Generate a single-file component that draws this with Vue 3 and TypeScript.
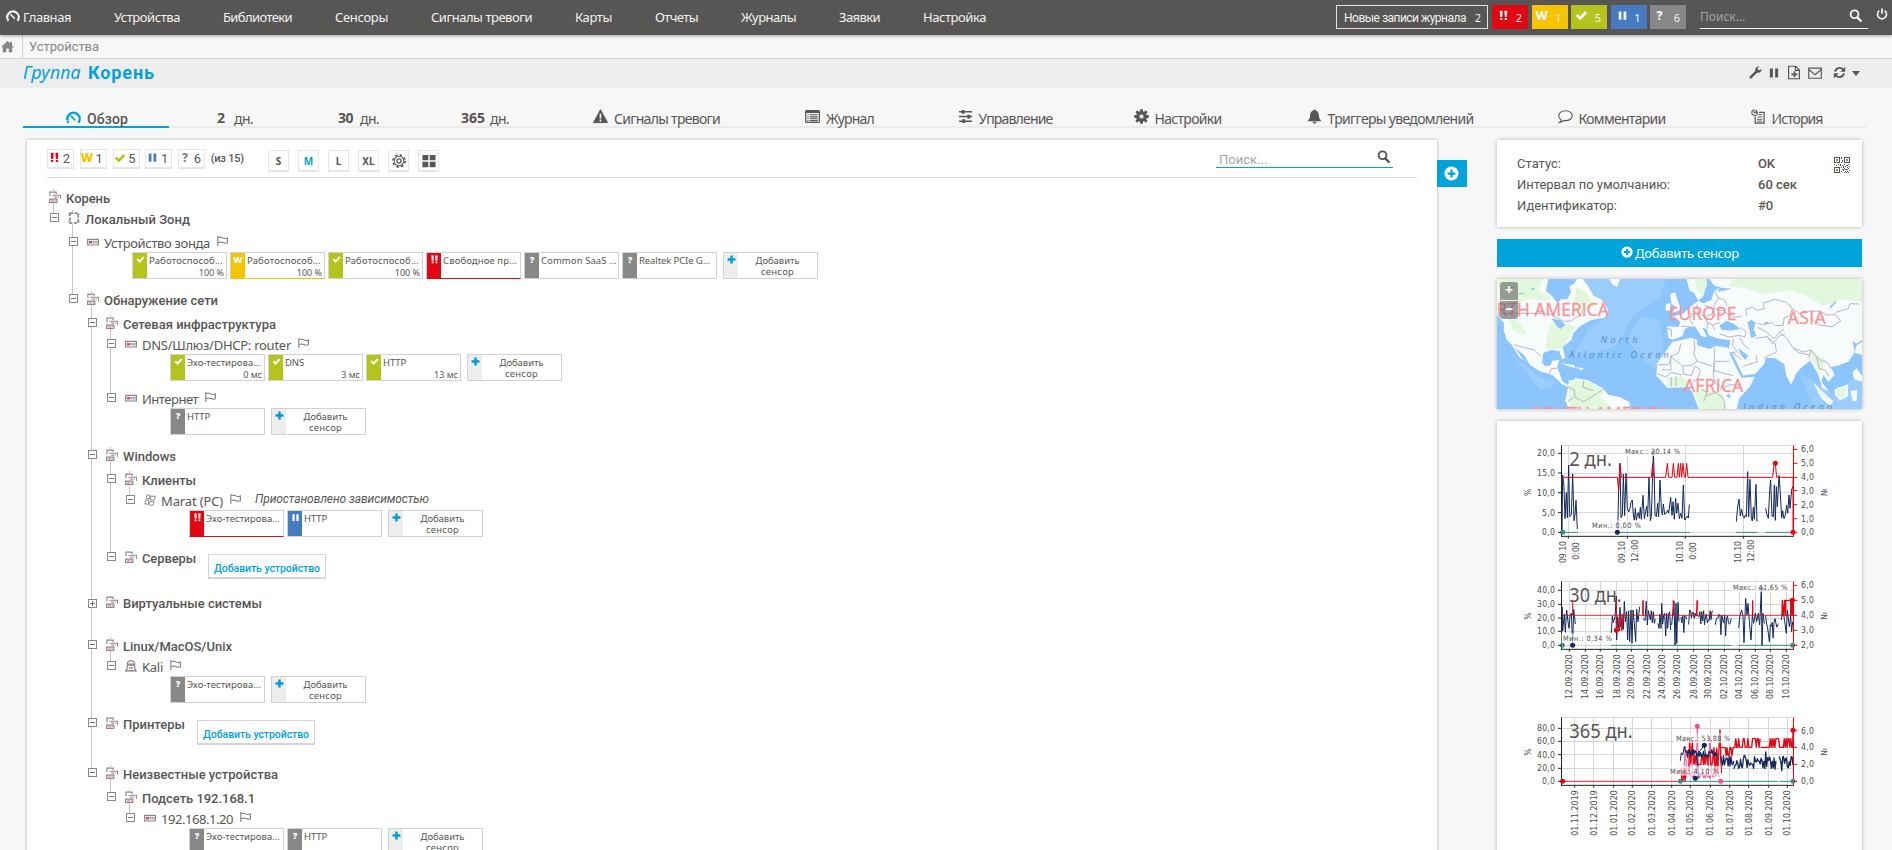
<script setup lang="ts">
type State = 'down' | 'warn' | 'up' | 'pause' | 'unknown'
interface Sensor { s: State; n: string; v?: string; w: number }
interface Row {
  d: number; kind: 'group' | 'probe' | 'device' | 'win' | 'linux'; t: string; w: number; gap: number
  toggle?: '-' | '+'; flag?: boolean; note?: string; btn?: boolean; sensors?: Sensor[]
}

/* Adjusts tracking so that a label takes the width reserved for it */
const vFit = {
  mounted(el: HTMLElement, b: { value?: number }) {
    if (!b.value) return
    const n = (el.textContent || '').trim().length
    const natural = el.getBoundingClientRect().width
    el.style.letterSpacing = (b.value - natural) / n + 'px'
  },
}

const nav: [string, number][] = [
  ['Главная', 48], ['Устройства', 66], ['Библиотеки', 69], ['Сенсоры', 53], ['Сигналы тревоги', 101],
  ['Карты', 37], ['Отчеты', 43], ['Журналы', 55], ['Заявки', 41], ['Настройка', 63],
]
const counters: { s: State; n: number }[] = [
  { s: 'down', n: 2 }, { s: 'warn', n: 1 }, { s: 'up', n: 5 }, { s: 'pause', n: 1 }, { s: 'unknown', n: 6 },
]
const tabs: { i?: string; b?: string; t: string; w: number; bw?: number; mr?: number; on?: boolean; box: number }[] = [
  { i: 'gauge', t: 'Обзор', w: 41, on: true, box: 146 },
  { b: '2', t: 'дн.', w: 19, bw: 8, mr: 9, box: 132 },
  { b: '30', t: 'дн.', w: 19, bw: 15, mr: 7, box: 115 },
  { b: '365', t: 'дн.', w: 19, bw: 24, mr: 5, box: 138 },
  { i: 'alert', t: 'Сигналы тревоги', w: 106, box: 205 },
  { i: 'list', t: 'Журнал', w: 48, box: 161 },
  { i: 'sliders', t: 'Управление', w: 74, box: 170 },
  { i: 'gear', t: 'Настройки', w: 67, box: 175 },
  { i: 'bell', t: 'Триггеры уведомлений', w: 146, box: 250 },
  { i: 'comment', t: 'Комментарии', w: 87, box: 193 },
  { i: 'history', t: 'История', w: 51, box: 157 },
]
const rows: Row[] = [
  { d: 0, kind: 'group', t: 'Корень', w: 44, gap: 0 },
  { d: 1, kind: 'probe', t: 'Локальный Зонд', w: 105, gap: 1, toggle: '-' },
  { d: 2, kind: 'device', t: 'Устройство зонда', w: 106, gap: 4, toggle: '-', flag: true, sensors: [
    { s: 'up', n: 'Работоспособ...', v: '100 %', w: 74 }, { s: 'warn', n: 'Работоспособ...', v: '100 %', w: 74 },
    { s: 'up', n: 'Работоспособ...', v: '100 %', w: 74 }, { s: 'down', n: 'Свободное пр...', w: 74 },
    { s: 'unknown', n: 'Common SaaS ...', w: 76 }, { s: 'unknown', n: 'Realtek PCIe G...', w: 71 } ] },
  { d: 2, kind: 'group', t: 'Обнаружение сети', w: 114, gap: 12, toggle: '-' },
  { d: 3, kind: 'group', t: 'Сетевая инфраструктура', w: 153, gap: 4, toggle: '-' },
  { d: 4, kind: 'device', t: 'DNS/Шлюз/DHCP: router', w: 149, gap: 1, toggle: '-', flag: true, sensors: [
    { s: 'up', n: 'Эхо-тестирова...', v: '0 мс', w: 74 }, { s: 'up', n: 'DNS', v: '3 мс', w: 19 }, { s: 'up', n: 'HTTP', v: '13 мс', w: 23 } ] },
  { d: 4, kind: 'device', t: 'Интернет', w: 56, gap: 9, toggle: '-', flag: true, sensors: [{ s: 'unknown', n: 'HTTP', w: 23 }] },
  { d: 3, kind: 'group', t: 'Windows', w: 53, gap: 12, toggle: '-' },
  { d: 4, kind: 'group', t: 'Клиенты', w: 54, gap: 4, toggle: '-' },
  { d: 5, kind: 'win', t: 'Marat (PC)', w: 62, gap: 1, toggle: '-', flag: true, note: 'Приостановлено зависимостью', sensors: [
    { s: 'down', n: 'Эхо-тестирова...', w: 74 }, { s: 'pause', n: 'HTTP', w: 23 } ] },
  { d: 4, kind: 'group', t: 'Серверы', w: 54, gap: 12, toggle: '-', btn: true },
  { d: 3, kind: 'group', t: 'Виртуальные системы', w: 139, gap: 25, toggle: '+' },
  { d: 3, kind: 'group', t: 'Linux/MacOS/Unix', w: 109, gap: 23, toggle: '-' },
  { d: 4, kind: 'linux', t: 'Kali', w: 21, gap: 1, toggle: '-', flag: true, sensors: [{ s: 'unknown', n: 'Эхо-тестирова...', w: 74 }] },
  { d: 3, kind: 'group', t: 'Принтеры', w: 62, gap: 12, toggle: '-', btn: true },
  { d: 3, kind: 'group', t: 'Неизвестные устройства', w: 155, gap: 30, toggle: '-' },
  { d: 4, kind: 'group', t: 'Подсеть 192.168.1', w: 113, gap: 4, toggle: '-' },
  { d: 5, kind: 'device', t: '192.168.1.20', w: 72, gap: 1, toggle: '-', flag: true, sensors: [
    { s: 'unknown', n: 'Эхо-тестирова...', w: 74 }, { s: 'unknown', n: 'HTTP', w: 23 } ] },
]
/* Connector lines: x, y1, y2 relative to the tree */
const lines = [
  [26, 11, 35], [45, 32, 120], [64, 113, 594], [83, 137, 219], [83, 269, 378], [102, 293, 321],
  [83, 459, 487], [83, 587, 619], [102, 611, 640],
]

const stateIcon: Record<State, string> = { down: 'bang', warn: 'w', up: 'check', pause: 'pause', unknown: 'q' }
const icons: Record<string, string> = {
  check: '<path d="M1 8.5 3.5 6 6.5 9 12.5 2.5 15 5 6.500 14z" fill="currentColor"/>',
  pause: '<path d="M2.500 2h4v12h-4zM9.500 2h4v12h-4z" fill="currentColor"/>',
  bang: '<path d="M2.500 1h4.200l-.6 9H3.100zM9.300 1h4.200l-.6 9H9.900zM3 11.500h3.200v3H3zM9.800 11.500H13v3H9.800z" fill="currentColor"/>',
  plus: '<path d="M5.800 1h4.400v4.800H15v4.400h-4.800V15H5.800v-4.800H1V5.800h4.800z" fill="currentColor"/>',
  gauge: '<path d="M2.800 13.500A6.600 6.600 0 1 1 13.200 13.500" fill="none" stroke="currentColor" stroke-width="2.600" stroke-dasharray="2.200 .5 30"/><path d="M5 6l5 5" stroke="currentColor" stroke-width="1.700"/>',
  home: '<path d="M8 1 0 9h2.200V15h4.300v-4.500h3V15h4.300V9H16l-2.500-2.500V2h-2.300v2.200z" fill="currentColor"/>',
  search: '<circle cx="6.800" cy="6.500" r="4.800" fill="none" stroke="currentColor" stroke-width="2.300"/><path d="M10.300 10.300 14.500 14.800" stroke="currentColor" stroke-width="2.800" stroke-linecap="round"/>',
  power: '<path d="M4.500 3.500A6 6 0 1 0 11.500 3.500" fill="none" stroke="currentColor" stroke-width="2.300"/><path d="M8 .8v7" stroke="currentColor" stroke-width="2.300"/>',
  wrench: '<path d="M15.300 3.800 12.700 5.300 10.800 4.200V2.200L13.300.7C11 0 8.300 1.300 7.700 3.900q-.3 1.200.1 2.300L.8 13q-.8 1 .2 2t2 .2l6.900-7c3 .9 6-1.300 5.400-4.400z" fill="currentColor"/>',
  file: '<path d="M1.800.8h8l4.400 4.400v10H1.800zM9.500.8v4.800h4.700" fill="none" stroke="currentColor" stroke-width="1.300"/><path d="M8.500 6.500v7M5 10h7" stroke="currentColor" stroke-width="2"/>',
  mail: '<path d="M.8 2.500h14.400v11.500H.8zM1 4l7 6 7-6" fill="none" stroke="currentColor" stroke-width="1.300"/>',
  refresh: '<path d="M2.500 7A5.700 5.700 0 0 1 12.500 4.500M13.500 9A5.700 5.700 0 0 1 3.500 11.500" fill="none" stroke="currentColor" stroke-width="2.300"/><path d="M15 1v6H9zM1 15V9h6z" fill="currentColor"/>',
  alert: '<path d="M8 .8 15.500 14.500H.5z" fill="currentColor" stroke="currentColor" stroke-linejoin="round"/><path d="M8 5v5M8 11.300v2" stroke="#f7f7f7" stroke-width="1.800"/>',
  list: '<rect x=".7" y="1.700" width="14.600" height="12.600" rx="1" fill="none" stroke="currentColor" stroke-width="1.300"/><path d="M1 3h14" stroke="currentColor" stroke-width="2.600"/><path d="M2.500 6.200h1.300M5 6.200h8.500M2.500 8.400h1.300M5 8.400h8.500M2.500 10.500h1.300M5 10.500h8.500M2.500 12.400h1.300M5 12.400h8.500" stroke="currentColor" stroke-width="1.100"/>',
  sliders: '<path d="M1 3h14M1 8h14M1 13h14" stroke="currentColor" stroke-width="1.500"/><path d="M4 1h3v4H4zM10 6h3v4h-3zM4.500 11h3v4h-3z" fill="currentColor"/>',
  gear: '<circle cx="8" cy="8" r="4" fill="none" stroke="currentColor" stroke-width="3.600"/><path d="M8 .3v3M8 12.700v3M.3 8h3M12.700 8h3M2.500 2.500l2.200 2.200M11.300 11.300l2.200 2.200M13.500 2.500l-2.200 2.200M4.700 11.300l-2.200 2.200" stroke="currentColor" stroke-width="3"/>',
  gearo: '<circle cx="8" cy="8" r="5.500" fill="none" stroke="currentColor" stroke-width="1.200"/><circle cx="8" cy="8" r="7" fill="none" stroke="currentColor" stroke-width="1.800" stroke-dasharray="2.700 2.800"/><circle cx="8" cy="8" r="2.400" fill="none" stroke="currentColor" stroke-width="1.500"/>',
  grid: '<path d="M.5 1h6.700v6.200H.5zM8.800 1h6.700v6.200H8.800zM.5 8.800h6.700V15H.5zM8.800 8.800h6.700V15H8.800z" fill="currentColor"/>',
  bell: '<path d="M8 .5c.8 0 1.200.5 1.200 1.200C12 2.500 12.600 5 12.800 7.500c.2 2.700 1 4 2.700 5.500H.5c1.700-1.500 2.500-2.800 2.700-5.500C3.400 5 4 2.500 6.800 1.700 6.800 1 7.200.5 8 .5zM6 13.500h4a2 2 0 0 1-4 0z" fill="currentColor"/>',
  comment: '<path d="M8 1.800c4 0 7.200 2.300 7.200 5.300S12 12.400 8 12.400q-1 0-1.800-.2Q4.500 14 1.700 14.300q1.700-1.300 1.600-3C1.700 10.200.8 8.700.8 7.100.8 4.100 4 1.800 8 1.800z" fill="none" stroke="currentColor" stroke-width="1.200"/>',
  history: '<path d="M4.500 8V15h9.500V3.500H8.500" fill="none" stroke="currentColor" stroke-width="1.300"/><path d="M8 6h4M7 8.500h5M6.500 11h5.500M6.500 13h5.500" stroke="currentColor"/><path d="M3 1 1 2.500v3L3.500 7 6 6.500 7 4.500 5.500 1v3H3.500z" fill="none" stroke="currentColor" stroke-width="1.100"/>',
  circleplus: '<circle cx="8" cy="8" r="7.500" fill="#fff"/><path d="M8 3.800v8.400M3.800 8h8.400" stroke="#00a3da" stroke-width="2.400"/>',
  group: '<path d="M1.200 7V1.500h8.300V4" fill="none" stroke="#888" stroke-width="1.500"/><path d="M4.500 5.600h11v5M.8 10.800h9.700v4.400H.8z" fill="none" stroke="#888" stroke-width="1.500"/><path d="M7 8.200h3.500M3 13h3" stroke="#ee7fa8" stroke-width="2"/><path d="M11.500 8.200h2M7.200 13h2" stroke="#aaa" stroke-width="1.500"/>',
  probe: '<path d="M2.500 1.500h11v13h-11z" fill="none" stroke="#777" stroke-width="2" stroke-dasharray="4.500 1.800"/><path d="M0 3h3M13 3h3M0 13h3M13 13h3" stroke="#999" stroke-width="1.500"/>',
  device: '<path d="M.8 4.500h14.400v7.500H.8z" fill="#eee" stroke="#8a8a8a" stroke-width="1.600"/><path d="M2.800 8.300h3.700" stroke="#e8256d" stroke-width="3"/><path d="M7.700 8.300h1.500M10.200 8.300h1.300M12.500 8.300h1.200" stroke="#888" stroke-width="3"/>',
  win: '<path d="M4 1.500q3-1 4 .5L7 7Q5.500 5.500 2.800 6.500zM9.500 2.500Q12 4 15 2.500L13.800 7.500Q11 8.500 8.600 7.500zM2.500 8.500q3-1 4 .5l-1 5Q4 12.500 1 13.500zM8.300 9.500q2.500 1.300 5.200 0L12.300 14.500Q9.500 15.700 7 14.500z" fill="none" stroke="#888" stroke-width="1.300"/>',
  linux: '<path d="M3 11V6Q3 1 8 1t5 5v5l2 3.500H1zM5 8V5.500h2V8M9 8V5.500h2V8" fill="none" stroke="#777" stroke-width="1.400"/><path d="M5.500 9.500h5l.7 2h-6.400z" fill="#e8256d" opacity=".7"/>',
  flag: '<path d="M1.200 0v16" stroke="#777" stroke-width="1.500"/><path d="M2 2.500Q5 1 8.500 3t6.500 0v8q-3 1.200-6.500-.7T2 10.800" fill="none" stroke="#777" stroke-width="1.600"/>',
}
const actions = ['wrench', 'pause', 'file', 'mail', 'refresh']
const sizes = ['S', 'M', 'L', 'XL']

/* Deterministic noise for the history charts */
function noise(x0: number, x1: number, step: number, lo: number, hi: number, seed: number, deep = 0, low = 0): string {
  let s = seed
  const r = () => ((s = (s * 16807) % 2147483647) / 2147483647)
  r(); r()
  const out: string[] = []
  for (let x = x0; x <= x1; x += step) {
    const y = r() < deep ? low - r() * 35 : lo + r() * (hi - lo)
    out.push(`${x.toFixed(1)},${y.toFixed(1)}`)
  }
  return out.join(' ')
}
function square(x0: number, x1: number, step: number, a: number, b: number, seed: number): string {
  let s = seed
  const r = () => ((s = (s * 16807) % 2147483647) / 2147483647)
  const out: string[] = []
  for (let x = x0; x <= x1; x += step) out.push(`${x},${r() > 0.5 ? a : b}`)
  return out.join(' ')
}
interface Chart {
  view: string; h: number; title: string; tw: number; ty: number; top: number; base: number; mid: number
  left: [string, number][]; right: [string, number][]; xs: [string, number][]; xl: number; xlen: number
  paths: { c: string; p: string; w?: number }[]; dots: [number, number, string][]
  max: [string, number, number, number]; min: [string, number, number, number]
}
const N = '#13295c', R = '#e30613', T = '#3c9089', P = '#ee4f96'
const charts: Chart[] = [
  {
    view: '51 3 1095 417', h: 139, title: '2 дн.', tw: 128, ty: 137, top: 76, base: 349, mid: 215,
    left: [['20,0', 100], ['15,0', 159], ['10,0', 218], ['5,0', 278], ['0,0', 337]],
    right: [['6,0', 88], ['5,0', 130], ['4,0', 172], ['3,0', 212], ['2,0', 254], ['1,0', 296], ['0,0', 337]],
    xs: [['', 265], ['', 442], ['', 616], ['', 790]], xl: 0, xlen: 0,
    paths: [
      { c: T, p: '247,337 294,337' }, { c: T, p: '413,337 629,337' }, { c: T, p: '768,337 833,337' }, { c: T, p: '855,337 940,337' },
      { c: N, p: '246,340 248,165 252,200 255,296 259,218 262,293 266,135 269,290 274,285 278,162 282,302 285,285 288,241 292,327' },
      { c: N, p: '413,337 416,210 420,130 423,293 427,285 430,162 434,287 438,160 442,265 446,276 450,265 453,247 457,240 460,285 463,301 466,265 469,301 472,285 475,278 478,295 481,262 484,298 489,226 493,296 497,275 500,258 503,290 507,172 511,302 514,290 518,165 520,92 523,180 525,285 529,290 533,250 536,290 540,180 544,265 547,285 550,252 554,283 558,280 563,270 566,280 572,232 576,286 579,245 583,298 587,235 590,280 594,250 598,296 602,280 606,295 610,195 614,300 618,294 622,288 625,294 628,253' },
      { c: N, p: '769,305 773,260 777,237 781,288 785,268 789,290 793,294 796,285 799,290 803,155 806,291 810,178 814,295 817,303 820,262 823,298 828,193 831,305' },
      { c: N, p: '857,265 861,285 865,295 869,212 872,180 876,288 880,290 883,195 886,301 889,200 892,260 897,166 900,205 905,294 908,272 912,296 916,285 920,256 923,280 927,225 930,265 935,210 938,200' },
      { c: R, p: '246,172 412,172 416,213 420,130 424,172 514,172 518,130 522,172 557,172 562,130 566,172 576,172 580,130 584,172 591,172 595,130 598,172 602,130 605,172 609,130 613,172 616,172 620,130 624,172 878,172 882,135 886,130 890,172 939,172 939,337', w: 3 },
    ],
    dots: [[248, 337, T], [412, 337, N], [520, 99, '#6e7391'], [886, 130, R], [939, 337, R]],
    max: ['Макс.: 20,14 %', 435, 102, 165], min: ['Мин.: 0,00 %', 336, 324, 146],
  },
  {
    view: '51 0 1095 420', h: 140, title: '30 дн.', tw: 157, ty: 125, top: 64, base: 268, mid: 166,
    left: [['40,0', 91], ['30,0', 133], ['20,0', 174], ['10,0', 214], ['0,0', 256]],
    right: [['6,0', 76], ['5,0', 121], ['4,0', 166], ['3,0', 211], ['2,0', 256]],
    xs: [['12.09.2020', 268], ['14.09.2020', 316], ['16.09.2020', 361], ['18.09.2020', 410], ['20.09.2020', 454], ['22.09.2020', 502], ['24.09.2020', 547], ['26.09.2020', 592], ['28.09.2020', 641], ['30.09.2020', 685], ['02.10.2020', 733], ['04.10.2020', 778], ['06.10.2020', 826], ['08.10.2020', 871], ['10.10.2020', 919]],
    xl: 415, xlen: 134,
    paths: [
      { c: T, p: '393,256 754,256' }, { c: T, p: '775,256 938,256' },
      { c: N, p: '247,141 248,213 253,162 256,217 260,150 264,185 267,205 270,165 274,160 278,256 281,148 286,192' },
      { c: N, p: '394,220 397,168 400,188 405,170 409,108 410,240 413,170 416,205 420,142 423,200 427,162 430,208 433,124' },
      { c: N, p: '433,124 436,185 440,155 443,240 446,152 449,245 453,150 456,250 459,150 463,190 467,245 470,148 474,185 479,140' },
      { c: N, p: '489,176 492,178 495,182 499,123 502,195 505,152 508,165 511,180 514,152 517,188 520,155 523,190 526,178' },
      { c: N, p: '534,190 537,205 540,163 543,205 545,130 548,192 551,165 554,160 557,228 560,160 563,205 566,162 569,155 572,210' },
      { c: N, p: '575,195 579,150 582,123 585,255 588,130 590,250 594,127 597,185' },
      { c: N, p: noise(603, 622, 2.8, 165, 195, 31, 0.3, 252) },
      { c: N, p: noise(626, 700, 2.8, 145, 195, 37, 0.08, 240) },
      { c: N, p: noise(706, 754, 2.8, 150, 200, 39, 0.16, 247) },
      { c: N, p: '776,204 780,165 785,150 789,170 792,248 797,115 801,165 804,130 808,185 813,240 817,165 821,190 826,160 830,185 835,160 839,195 844,86 846,256 849,160 853,190' },
      { c: N, p: noise(857, 897, 2.8, 160, 203, 81, 0.12, 248) }, { c: N, p: '904,180 909,145 914,185 919,220 922,150 928,200 932,168 935,215 938,185' },
      { c: R, p: '246,166 939,166', w: 2.5 }, { c: R, p: '278,166 278,122' }, { c: R, p: '409,120 409,211 418,211 421,167 426,211 429,167', w: 4 },
      { c: R, p: '489,167 489,121', w: 5 }, { c: R, p: '580,167 580,121', w: 4 }, { c: R, p: '650,167 652,121', w: 5 }, { c: R, p: '818,167 818,121', w: 4 },
      { c: R, p: '906,167 907,121 911,167 914,121 917,167 917,121 932,121 932,167 937,121 937,167', w: 4 },
    ],
    dots: [[247, 256, T], [278, 256, N], [409, 211, R], [844, 87, '#596586'], [937, 121, R], [938, 256, T]],
    max: ['Макс.: 41,65 %', 759, 90, 163], min: ['Мин.: 0,34 %', 249, 243, 146],
  },
  {
    view: '51 0 1095 450', h: 150, title: '365 дн.', tw: 190, ty: 113, top: 52, base: 256, mid: 154,
    left: [['80,0', 85], ['60,0', 124], ['40,0', 164], ['20,0', 205], ['0,0', 244]],
    right: [['6,0', 92], ['4,0', 142], ['2,0', 193], ['0,0', 244]],
    xs: [['01.11.2019', 284], ['01.12.2019', 341], ['01.01.2020', 401], ['01.02.2020', 457], ['01.03.2020', 515], ['01.04.2020', 575], ['01.05.2020', 631], ['01.06.2020', 691], ['01.07.2020', 749], ['01.08.2020', 806], ['01.09.2020', 866], ['01.10.2020', 922]],
    xl: 405, xlen: 136,
    paths: [
      { c: T, p: '601,244 892,244' }, { c: T, p: '899,244 940,244' },
      { c: P, p: '611,225 616,140 620,220 627,225 633,150 638,220 648,225 652,79 656,225 684,225 690,110 694,215 700,150 706,220 712,150' },
      { c: P, p: noise(606, 720, 2.6, 215, 238, 21) },
      { c: R, p: square(603, 620, 3, 243, 205, 5), w: 4 }, { c: R, p: '626,215 629,115 632,190 637,123 640,190', w: 4 },
      { c: R, p: square(640, 698, 2.5, 166, 193, 28), w: 4 }, { c: R, p: '698,190 702,143 706,215 710,145 713,215 720,90 724,220', w: 4 },
      { c: N, p: '601,182 604,158 608,165 613,139 616,155 620,158' }, { c: N, p: noise(620, 713, 2.8, 147, 172, 9), w: 4 },
      { c: N, p: '655,235 650,165 673,136 677,170' },
      { c: R, p: '722,143 736,143 ' + square(738, 759, 3, 143, 167, 7), w: 4 }, { c: R, p: square(759, 842, 2.8, 116, 142, 61), w: 4 },
      { c: R, p: '842,142 866,142 ' + square(868, 939, 2.8, 116, 142, 4) + ' 939,90', w: 4 },
      { c: N, p: noise(722, 762, 2.8, 162, 200, 44), w: 4 }, { c: N, p: noise(762, 889, 2.8, 170, 209, 26, 0.03, 190), w: 4 }, { c: N, p: noise(897, 939, 2.8, 162, 221, 33), w: 4 },
      { c: R, p: '246,244 601,244', w: 2.5 },
    ],
    dots: [[248, 244, R], [601, 244, T], [652, 79, P], [673, 136, N], [646, 235, N], [722, 244, P], [939, 91, R], [939, 244, T]],
    max: ['Макс.: 53,88 %', 588, 123, 163], min: ['Мин.: 4,10 %', 570, 221, 146],
  },
]
const days: [string, string, number][] = [['09.10', '0:00', 265], ['09.10', '12:00', 442], ['10.10', '0:00', 616], ['10.10', '12:00', 790]]
const info: [string, string, number, number][] = [['Статус:', 'OK', 44, 17], ['Интервал по умолчанию:', '60 сек', 153, 39], ['Идентификатор:', '#0', 100, 15]]
</script>

<template>
  <div class="page">
    <header class="top">
      <svg class="logo" viewBox="0 0 16 16" v-html="icons.gauge"></svg>
      <nav class="nav"><a v-for="n in nav" :key="n[0]" :style="{ width: n[1] + 'px' }"><span v-fit="n[1]">{{ n[0] }}</span></a></nav>
      <div class="newlog"><span v-fit="122">Новые записи журнала</span><b>2</b></div>
      <div v-for="c in counters" :key="c.s" class="cnt" :class="c.s">
        <i v-if="c.s === 'warn'" class="gl">W</i><i v-else-if="c.s === 'unknown'" class="gl">?</i>
        <svg v-else viewBox="0 0 16 16" v-html="icons[stateIcon[c.s]]"></svg><span>{{ c.n }}</span>
      </div>
      <div class="tsearch"><span>Поиск...</span><svg viewBox="0 0 16 16" v-html="icons.search"></svg></div>
      <svg class="power" viewBox="0 0 16 16" v-html="icons.power"></svg>
    </header>
    <div class="crumbs"><svg viewBox="0 0 16 16" v-html="icons.home"></svg><span class="bar"></span><span v-fit="70">Устройства</span></div>
    <div class="titlebar">
      <h1><em><span v-fit="58">Группа</span></em><strong><span v-fit="67">Корень</span></strong></h1>
      <div class="actions"><svg v-for="a in actions" :key="a" :class="'a-' + a" viewBox="0 0 16 16" v-html="icons[a]"></svg><span class="caret"></span></div>
    </div>
    <div class="tabs">
      <div v-for="(t, k) in tabs" :key="k" class="tab" :class="{ on: t.on }" :style="{ width: t.box + 'px' }">
        <svg v-if="t.i" viewBox="0 0 16 16" v-html="icons[t.i]"></svg>
        <b v-else :style="{ marginRight: t.mr + 'px' }"><span v-fit="t.bw">{{ t.b }}</span></b>
        <span class="tl" :style="{ width: t.w + 'px' }"><span v-fit="t.w">{{ t.t }}</span></span>
      </div>
    </div>

    <div class="body">
      <main class="panel">
        <div class="tools">
          <div v-for="c in counters" :key="c.s" class="filter">
            <i v-if="c.s === 'warn'" class="gl f-warn">W</i><i v-else-if="c.s === 'unknown'" class="gl f-unknown">?</i>
            <svg v-else :class="'f-' + c.s" viewBox="0 0 16 16" v-html="icons[stateIcon[c.s]]"></svg><span>{{ c.n }}</span>
          </div>
          <span class="total"><span v-fit="33">(из 15)</span></span>
          <div class="sizes">
            <div v-for="s in sizes" :key="s" :class="{ sel: s === 'M' }">{{ s }}</div>
            <div><svg viewBox="0 0 16 16" v-html="icons.gearo"></svg></div>
            <div><svg viewBox="0 0 16 16" v-html="icons.grid"></svg></div>
          </div>
          <div class="psearch"><span>Поиск...</span><svg viewBox="0 0 16 16" v-html="icons.search"></svg></div>
        </div>
        <div class="tree">
          <svg class="links" width="200" height="672" shape-rendering="crispEdges">
            <path v-for="(l, k) in lines" :key="k" :d="`M${l[0] + 0.5} ${l[1]}V${l[2]}`" stroke="#c4c4c4" />
          </svg>
          <div v-for="(r, k) in rows" :key="k" class="node" :style="{ marginTop: r.gap + 'px', paddingLeft: 5 + r.d * 19 + 'px' }">
            <div class="line">
              <span v-if="r.toggle" class="toggle" :class="{ plus: r.toggle === '+' }"></span>
              <span v-else class="notoggle"></span>
              <svg class="kind" viewBox="0 0 16 16" v-html="icons[r.kind]"></svg>
              <span class="name" :class="{ bold: r.kind === 'group' || r.kind === 'probe' }" :style="{ width: r.w + 'px' }"><span v-fit="r.w">{{ r.t }}</span></span>
              <svg v-if="r.flag" class="flag" viewBox="0 0 16 16" preserveAspectRatio="none" v-html="icons.flag"></svg>
              <em v-if="r.note" class="note"><span v-fit="174">{{ r.note }}</span></em>
              <div v-if="r.btn" class="adddev"><span v-fit="106">Добавить устройство</span></div>
            </div>
            <div v-if="r.sensors" class="sensors">
              <div v-for="(s, j) in r.sensors" :key="j" class="sensor" :class="'l-' + s.s">
                <div class="st" :class="s.s">
                  <i v-if="s.s === 'warn'" class="gl">W</i><i v-else-if="s.s === 'unknown'" class="gl">?</i>
                  <svg v-else viewBox="0 0 16 16" v-html="icons[stateIcon[s.s]]"></svg>
                </div>
                <div class="sn"><span v-fit="s.w">{{ s.n }}</span></div>
                <div v-if="s.v" class="sv">{{ s.v }}</div>
              </div>
              <div class="sensor add">
                <div class="st"><svg viewBox="0 0 16 16" v-html="icons.plus"></svg></div>
                <div class="at"><span v-fit="44">Добавить</span><br /><span v-fit="33">сенсор</span></div>
              </div>
            </div>
          </div>
        </div>
      </main>
      <div class="plusbox"><svg viewBox="0 0 16 16" v-html="icons.circleplus"></svg></div>

      <aside class="side">
        <section class="card info">
          <div v-for="r in info" :key="r[0]" class="irow"><span class="k"><span v-fit="r[2]">{{ r[0] }}</span></span><b><span v-fit="r[3]">{{ r[1] }}</span></b></div>
          <svg class="qr" viewBox="0 0 16 16" shape-rendering="crispEdges">
            <path d="M.5.500h5v5h-5zM10.500.500h5v5h-5zM.5 10.500h5v5h-5z" fill="none" stroke="#555" />
            <path d="M2 2h2v2H2zM12 2h2v2h-2zM2 12h2v2H2z" fill="#6a9a4a" />
            <path d="M7 0h1v2H7zM8 3h1v2H8zM7 5h1v1H7zM0 7h1v1H0zM2 8h1v1H2zM4 7h1v1H4zM6 7h1v2H6zM8 8h1v1H8zM10 7h1v1h-1zM12 8h1v1h-1zM14 7h1v1h-1zM7 10h1v1H7zM9 10h1v1H9zM11 9h1v1h-1zM13 10h1v1h-1zM15 9h1v1h-1zM8 12h1v1H8zM10 11h1v1h-1zM12 12h1v1h-1zM14 11h1v1h-1zM7 14h1v1H7zM9 13h1v1H9zM11 14h1v1h-1zM13 14h1v1h-1zM15 13h1v1h-1zM10 15h1v1h-1zM14 15h1v1h-1zM9 12h1v1H9zM11 12h1v1h-1zM13 12h1v1h-1zM9 9h1v1H9zM13 8h1v1h-1zM12 15h1v1h-1z" fill="#555" />
          </svg>
        </section>
        <div class="addsensor"><svg viewBox="0 0 16 16" v-html="icons.circleplus"></svg><span v-fit="104">Добавить сенсор</span></div>
        <section class="map">
          <svg viewBox="51 57 1095 390" width="365" height="130">
            <rect x="51" y="57" width="1095" height="390" fill="#8cc4fc" />
            <path d="M270 57h290l-25 60 -75 50-50 90-60 20-70 10 50-90 50-20-5-40-45-30zM440 240l40-70 60 10 10 90-25 60-35-30zM960 340l100 60 86-60v107H1000zM100 290l80 60 60 20-60 20z" fill="#9accfd" />
            <g fill="#f8fbfc">
              <path d="M51 57H205L198 92 216 108 233 130 243 118H262L273 97 268 78 284 70 292 57H308L322 75 341 108 362 116 384 148 374 174 352 176 333 181 312 192 300 199 280 220 274 240 248 261 256 294 246 298 238 273 213 270 190 279 186 308 196 319 212 316 217 302 238 300 232 320 239 341 247 364 262 374 286 355 322 360 349 374 368 385 385 404 420 411 449 427V447H266L256 421 264 382 245 372 218 346 180 334 151 316 132 286 104 262 132 302 118 292 96 256 80 239 71 211 72 190 51 165z" />
              <path d="M388 57H420L412 80 398 75zM571 103L585 96 596 130 603 150 578 158 586 142 574 130zM558 132L572 130 571 151 557 152zM620 57H676L682 70 667 112 655 122 642 98 628 91zM240 309L282 315 287 325 264 318zM287 322L312 324 303 331zM1110 235L1140 188 1146 175V240L1128 251zM1128 257L1146 245V285L1125 278zM1000 368L1030 397 1060 424 1050 437 1024 415zM1064 388L1105 373 1103 410 1079 421 1065 405zM1118 335L1130 325 1146 348V365L1122 357zM1112 393L1132 391 1130 422 1118 424z" />
              <path d="M561 199L596 201 601 186 580 168 608 163 626 145 642 132 655 122 670 130 694 120 703 91 718 84 713 95 738 91 755 86 724 83 701 76 689 57H1146V222L1128 220 1118 245 1124 276 1105 305 1073 317 1052 321 1064 344 1045 365 1030 345 1024 365 1046 393 1026 385 1014 342 991 302 962 324 947 343 934 375 919 349 913 313 886 295 857 293 853 311 826 341 781 348 762 306 745 277 751 241 711 235 686 226 680 207 668 204 681 232 663 228 645 199 626 201 614 208 607 229 578 239 565 234z" />
              <path d="M577 246L633 233 651 239 652 256 688 267 708 257 744 263 765 301 784 353 824 350 811 378 777 416 770 447H656L637 397 626 382 562 383 529 347 532 309 553 280z" />
            </g>
            <g fill="#e1f8dc">
              <path d="M51 57H190L175 92 215 113 196 123 150 116 110 132 60 108zM291 80L320 97 344 137 300 162 275 155zM213 189L291 198 265 237 243 267 196 268 201 225zM266 360L325 364 373 393 360 410 400 447H268zM83 170L116 184 142 225 102 215zM760 57H1146V125L1087 118 1030 137 980 107 930 90 850 103 794 84 744 78zM621 57H681L670 110 649 91 646 60zM560 352L605 348 632 370 606 380 562 376zM645 391H720L743 447H657zM992 270L1038 303 1020 340 998 304zM1072 382L1099 379 1094 416 1068 405zM1012 378L1048 421 1024 410z" />
            </g>
            <g fill="#8cc4fc">
              <path d="M719 196L740 182 761 191 781 207 750 212 724 209zM802 187L815 179 827 188 821 207 829 227 814 235 809 214zM214 175L242 181 256 194 242 207 231 199zM747 278L781 347 790 349 758 282zM774 264L805 287 796 300 783 285zM702 93L711 86 712 91zM738 407L749 401 751 416z" />
              <path d="M92 80h12v5H92zM117 98h15v4h-15zM155 83h8v6h-8zM175 130h12v6h-12zM853 186h12v5h-12zM1048 142l18-19 3 4-17 18z" />
            </g>
            <g fill="none" stroke="#b6b5ca" stroke-width="3" stroke-linejoin="round">
              <path d="M65 160H206L220 168 250 184 273 183 307 160M102 254L134 263 163 270 183 289M207 342L213 327 239 323M262 379L283 391 285 412 311 425 349 402 368 388M311 362L309 382 340 392M281 412L265 424M575 286L566 314H535M603 250L595 280 572 290 573 330 546 329M642 239L645 265 641 280 651 304 635 316 608 318 572 290M703 265V304H748M702 307L700 350 709 374 735 385M651 304L696 318M608 318L611 342 634 347 645 318 661 329 655 353 638 367M532 340L556 351 575 337 606 345M574 351V379M588 350V379M704 304L702 332 728 339 759 347M720 389L750 374 781 375M677 408L708 397 731 417 735 447M664 387L681 397 671 425M560 205L575 209 574 230M603 199L633 201M622 151L635 164 629 177 639 194M650 134L655 158 674 170 696 163 701 145 673 136M674 170L681 186 697 194 719 188M684 186L681 205M697 194L704 209M701 146L730 153 758 171 783 170M703 93L716 115 705 128 701 146M716 115L733 119 741 137M719 222L747 231 778 226 795 231 798 214 780 202M761 235L757 256 776 281M778 231L790 253 807 267M750 278L768 276M826 235L861 230 886 251 889 276 853 293M800 167L797 149 817 141 831 151 853 146 849 129 886 118 919 127 937 146 929 167 912 174 910 196 884 197 875 188 851 194 832 190M832 202L855 213 884 236 897 217 912 209M937 146L960 161 993 153 1022 154 1039 165 1067 164 1082 183 1056 200 1019 195 995 176M1067 157L1105 146 1110 131 1138 132M900 219L916 230 938 262 969 276 994 270 1010 291 1028 308M861 230L877 253 897 229 914 221M940 267L956 278 989 285M994 270L987 295M1010 291L1018 325 1037 331 1047 349M1025 298L1045 311 1052 326M788 319L831 306 828 286M759 279L785 299" />
            </g>
            <g class="cont">
              <text x="50" y="169" textLength="336">RTH AMERICA</text><text x="566" y="179" textLength="203">EUROPE</text>
              <text x="923" y="192" textLength="114">ASIA</text><text x="612" y="396" textLength="178">AFRICA</text>
              <text x="155" y="481" textLength="413">SOUTH AMERICA</text>
            </g>
            <g class="ocean">
              <text x="362" y="250" textLength="110">North</text><text x="268" y="293" textLength="298">Atlantic Ocean</text><text x="790" y="451" textLength="266">Indian Ocean</text>
            </g>
          </svg>
          <div class="zoom"><span>+</span><span>−</span></div>
        </section>
        <section class="card graphs">
          <svg v-for="(c, ci) in charts" :key="ci" class="chart" :viewBox="c.view" width="365" :height="c.h">
            <g stroke="#d6d6d6" stroke-width="3" shape-rendering="crispEdges">
              <path v-for="l in c.left" :key="l[0]" :d="`M246 ${l[1]}H940`" />
              <path v-for="x in c.xs" :key="x[1]" :d="`M${x[1]} ${c.top}V${c.base}`" />
              <path :d="`M246 ${c.top}H940`" />
            </g>
            <text class="ct" x="268" :y="c.ty" :textLength="c.tw" lengthAdjust="spacingAndGlyphs">{{ c.title }}</text>
            <polyline v-for="(p, k) in c.paths" :key="k" :points="p.p" fill="none" :stroke="p.c" :stroke-width="p.w || 3" stroke-linejoin="round" />
            <path :d="`M244.500 ${c.top}V${c.base + 1}M243 ${c.base}H941`" stroke="#222" stroke-width="3" fill="none" />
            <path :d="`M940.500 ${c.top}V${c.base + 1}`" stroke="#e30613" stroke-width="3" />
            <circle v-for="(d, k) in c.dots" :key="k" :cx="d[0]" :cy="d[1]" r="7.500" :fill="d[2]" />
            <g class="ax">
              <template v-for="l in c.left" :key="l[0]"><text x="225" :y="l[1] + 9" :textLength="l[0].length > 3 ? 54 : 39" text-anchor="end">{{ l[0] }}</text><path :d="`M234 ${l[1]}h10`" stroke="#222" stroke-width="3" /></template>
              <template v-for="l in c.right" :key="l[0]"><text x="963" :y="l[1] + 9" textLength="39">{{ l[0] }}</text><path :d="`M940 ${l[1]}h12`" stroke="#e30613" stroke-width="3" /></template>
              <template v-for="x in c.xs" :key="x[1]">
                <path :d="`M${x[1]} ${c.base}v7`" stroke="#222" stroke-width="3" />
                <text v-if="x[0]" :transform="`translate(${x[1] + 9} ${c.xl + 2}) rotate(-90)`" :textLength="c.xlen">{{ x[0] }}</text>
              </template>
              <template v-if="ci === 0">
                <template v-for="(d, k) in days" :key="k">
                  <text :transform="`translate(${d[2] - 8} 429) rotate(-90)`" textLength="66">{{ d[0] }}</text>
                  <text :transform="`translate(${d[2] + 31} ${d[1] === '0:00' ? 419 : 427}) rotate(-90)`">{{ d[1] }}</text>
                </template>
              </template>
              <text :transform="`translate(152 ${c.mid + 13}) rotate(-90)`">%</text>
              <text :transform="`translate(1042 ${c.mid + 14}) rotate(-90)`">№</text>
            </g>
            <template v-for="(m, k) in [c.max, c.min]" :key="k">
              <rect :x="m[1] - 5" :y="m[2] - 23" :width="m[3] + 12" height="29" fill="#fff" opacity=".6" />
              <text class="mm" :x="m[1]" :y="m[2]" :textLength="m[3]">{{ m[0] }}</text>
            </template>
          </svg>
        </section>
      </aside>
    </div>
  </div>
</template>

<style>
html, body { margin: 0; overflow: hidden; background: #f7f7f7; }
</style>
<style scoped>
* { box-sizing: border-box; }
.page { width: 1892px; height: 850px; overflow: hidden; background: #f7f7f7; color: #575654; font: 13px/20px "Noto Sans", "Open Sans", sans-serif; }
.page span { white-space: nowrap; }
svg { flex: none; display: block; }
.gl { font: 900 12px/12px "Open Sans", sans-serif; font-style: normal; }
.top { height: 35px; background: #575654; display: flex; align-items: flex-start; color: #f2f2f2; box-shadow: 0 1px 3px rgba(0,0,0,.35); position: relative; }
.logo { width: 14px; height: 14px; margin: 9px 3px 0 6px; }
.nav { display: flex; gap: 43px; padding-top: 7px; margin-right: auto; }
.nav a { white-space: nowrap; }
.newlog { border: 1px solid #e5e5e5; width: 152px; height: 24px; margin: 5px 4px 0 0; padding: 0 6px 0 7px; display: flex; justify-content: space-between; font-size: 12px; line-height: 24px; font-family: Roboto, sans-serif; }
.newlog b { font-weight: 400; font-family: "Noto Sans", sans-serif; font-size: 11px; line-height: 23px; }
.cnt { width: 36px; height: 24px; margin: 5px 3.500px 0 0; display: flex; align-items: center; justify-content: space-between; padding: 0 6px 0 6px; font-size: 11px; line-height: 24px; }
.cnt svg { width: 11px; height: 11px; margin-top: -3px; }
.cnt.up svg { width: 13px; height: 13px; margin-left: -2px; }
.cnt .gl { margin-top: -3px; width: 11px; margin-left: -2px; text-align: center; }
.cnt span { padding-top: 2px; }
.down { background: #e30613; } .warn { background: #f6c500; } .up { background: #b5c41c; } .pause { background: #467cbf; } .unknown { background: #888; }
.tsearch { width: 168px; height: 24px; margin: 5px 8px 0 10.500px; border-bottom: 1px solid #fff; display: flex; justify-content: space-between; align-items: center; color: #a5a5a5; font-size: 12px; }
.tsearch svg { width: 13px; height: 13px; color: #f2f2f2; margin: -3px 6px 0 0; }
.power { width: 12px; height: 12px; margin: 8px 4px 0 0; }
.crumbs { height: 24px; border-bottom: 1px solid #d2d2d2; display: flex; align-items: center; color: #868686; font: 13px/24px Roboto, sans-serif; padding-left: 1px; }
.crumbs svg { width: 13px; height: 13px; margin: -1px 8px 0 0; }
.bar { width: 1px; height: 23px; background: #d5d5d5; margin-right: 6px; }
.titlebar { height: 29px; background: #ededed; display: flex; justify-content: space-between; align-items: center; padding: 0 32px 0 23px; }
h1 { margin: -2px 0 0; display: flex; gap: 7px; font-size: 18px; line-height: 27px; color: #00a3da; font-weight: 400; }
h1 em { width: 58px; } h1 strong { width: 67px; font-family: Roboto, sans-serif; font-weight: 700; }
.actions { display: flex; align-items: center; }
.actions svg { width: 13px; height: 13px; margin-right: 8px; margin-top: -2px; }
.actions .a-pause { width: 12px; height: 12px; margin: -2px 7px 0 -2px; }
.actions .a-file { height: 15px; width: 14px; margin-right: 7px; } .actions .a-mail { width: 14px; height: 14px; margin-right: 11px; }
.actions .a-refresh { margin-right: 6px; }
.caret { border: 4.500px solid transparent; border-top: 5px solid #575654; border-bottom: 0; }
.tabs { margin: 21px 26px 0 23px; height: 19px; border-bottom: 2px solid #ebebeb; display: flex; font-size: 14px; box-sizing: border-box; }
.tab { flex: none; height: 19px; display: flex; justify-content: center; align-items: flex-start; }
.tab svg { width: 15px; height: 15px; margin: 0 6px 0 0; }
.tab b { font: 700 14px/20px "Noto Sans", sans-serif; margin-top: -1px; }
.tl { line-height: 19px; }
.tab.on { border-bottom: 2px solid #00a3da; font-family: Roboto, sans-serif; font-weight: 500; padding-left: 2px; }
.tab.on .tl { line-height: 21px; }
.tab.on svg { color: #00a3da; margin-top: 1px; }
.body { display: flex; align-items: flex-start; margin-top: 12px; }
.panel { width: 1410px; height: 720px; margin-left: 27px; background: #fff; box-shadow: 0 0 3px rgba(0,0,0,.3); padding: 0 20px; flex: none; }
.tools { height: 38px; border-bottom: 1px solid #d5d5d5; display: flex; }
.filter { width: 27px; height: 20px; margin: 9px 5.750px 0 0; border: 1px solid #e6e6e6; border-bottom-width: 2px; display: flex; align-items: center; justify-content: space-between; padding: 0 3px 0 2px; font: 13px/19px Roboto, sans-serif; }
.filter svg { width: 11px; height: 11px; margin: -2px 0 0 -1px; } .filter .gl { margin-top: -2px; width: 12px; margin-left: -2px; text-align: center; }
.filter .f-up { width: 12px; height: 12px; margin-left: -2px; }
.f-down { color: #e30613; } .f-warn { color: #f6c500; } .f-up { color: #b5c41c; } .f-pause { color: #467cbf; } .f-unknown { color: #888; }
.total { font: 500 11px/37px Roboto, sans-serif; width: 33px; }
.sizes { display: flex; gap: 9px; margin: 10px 0 0 24.250px; }
.sizes div { width: 21px; height: 22px; border: 1px solid #e6e6e6; border-bottom-width: 2px; display: flex; justify-content: center; align-items: center; font: 700 10px/18px "Noto Sans", sans-serif; }
.sizes .sel { color: #00a3da; } .sizes svg { width: 14px; height: 14px; }
.psearch { margin-left: auto; margin-right: 24px; width: 177px; height: 28px; border-bottom: 1px solid #00a3da; display: flex; justify-content: space-between; align-items: flex-end; padding: 0 3px 0 3px; color: #a5a5a5; font: 13px/15px Roboto, sans-serif; }
.psearch svg { width: 13px; height: 13px; color: #575654; margin-bottom: 4px; }
.tree { position: relative; margin-left: -20px; padding-top: 11px; }
.links { position: absolute; left: 0; top: 0; }
.node { position: relative; }
.line { height: 20px; display: flex; align-items: center; }
.toggle { width: 9px; height: 9px; border: 1px solid #888; background: linear-gradient(#777, #777) center/5px 1px no-repeat #fff; margin: -5px 9px 0 -1px; flex: none; }
.toggle.plus { background: linear-gradient(#777, #777) center/5px 1px no-repeat, linear-gradient(#777, #777) center/1px 5px no-repeat, #fff; margin-top: -1px; }
.notoggle { width: 17px; }
.kind { width: 12px; height: 12px; margin: -4px 5px 0 0; background: #fff; }
.name { margin-top: -2px; }
.name.bold { margin-top: 0; font-family: Roboto, sans-serif; font-weight: 500; font-size: 13px; }
.flag { width: 11px; height: 10px; margin: -6px 0 0 7px; }
.note { margin: -6px 0 0 14px; font: italic 12px/20px Roboto, sans-serif; }
.adddev { align-self: flex-start; margin: 5px 0 0 12px; width: 118px; height: 25px; flex: none; border: 1px solid #d5d5d5; border-bottom-width: 2px; color: #00a3da; font: 500 10.500px/27px Roboto, sans-serif; text-align: center; }
.sensors { display: flex; gap: 3px; margin: -2px 0 0 62px; height: 27px; }
.sensor { width: 95px; height: 27px; border: 1px solid #d2d2d2; flex: none; display: grid; grid-template-columns: 14px 1fr; grid-template-rows: 14px 11px; font-size: 10px; }
.st { grid-row: 1 / 3; color: #fff; display: flex; justify-content: center; padding-top: 2px; }
.st svg { width: 9px; height: 9px; } .st .gl { font-size: 9px; line-height: 9px; }
.sn { padding-left: 2px; line-height: 15px; font-size: 9.500px; }
.sv { grid-column: 2; text-align: right; line-height: 11px; padding-right: 2px; font-size: 9px; }
.l-warn { border-bottom-color: #f6c500; } .l-down { border-bottom-color: #e30613; }
.add { margin-left: 3px; } .add .st { background: #ededed; color: #009bd3; }
.at { grid-row: 1 / 3; text-align: center; line-height: 11px; padding-top: 2px; font-size: 9.500px; }
.plusbox { width: 30px; height: 27px; margin-top: 20px; background: #00a3da; display: flex; align-items: center; justify-content: center; flex: none; }
.plusbox svg { width: 15px; height: 15px; margin-left: -1px; }
.side { width: 365px; margin-left: 30px; flex: none; }
.card { background: #fff; box-shadow: 0 0 4px rgba(0,0,0,.28); }
.info { height: 87px; padding: 13px 20px; position: relative; font: 13px/21px Roboto, sans-serif; }
.irow { display: flex; height: 21px; } .k { width: 241px; } .irow b { font-weight: 500; }
.qr { position: absolute; right: 12px; top: 17px; width: 16px; height: 16px; }
.addsensor { height: 28px; margin: 12px 0; background: #00a3da; color: #fff; display: flex; justify-content: center; align-items: center; font-size: 13px; padding-left: 1px; }
.addsensor svg { width: 12px; height: 12px; margin: -3px 2px 0 0; }
.map { height: 130px; position: relative; box-shadow: 0 0 4px rgba(0,0,0,.28); overflow: hidden; }
.cont text { font: 52px "Open Sans", sans-serif; fill: #fa9094; stroke: #fa9094; stroke-width: .8px; }
.ocean text { font: italic 27px "Open Sans", sans-serif; fill: #5088c8; }
.zoom { position: absolute; left: 3px; top: 3px; display: grid; gap: 1px; }
.zoom span { width: 18px; height: 18px; background: rgba(100,100,100,.62); color: #fff; text-align: center; font: 700 14px/15px "Open Sans", sans-serif; border-radius: 3px 3px 0 0; }
.zoom span + span { border-radius: 0 0 3px 3px; }
.graphs { margin-top: 12px; height: 440px; }
.chart { overflow: visible; }
.ct { font: 60px "Noto Sans", sans-serif; fill: #575654; }
.ax text { font: 26px "DejaVu Sans Condensed", "DejaVu Sans", sans-serif; fill: #4c4c4c; }
.mm { font: 22px "DejaVu Sans Condensed", "DejaVu Sans", sans-serif; fill: #4c4c4c; }
</style>
